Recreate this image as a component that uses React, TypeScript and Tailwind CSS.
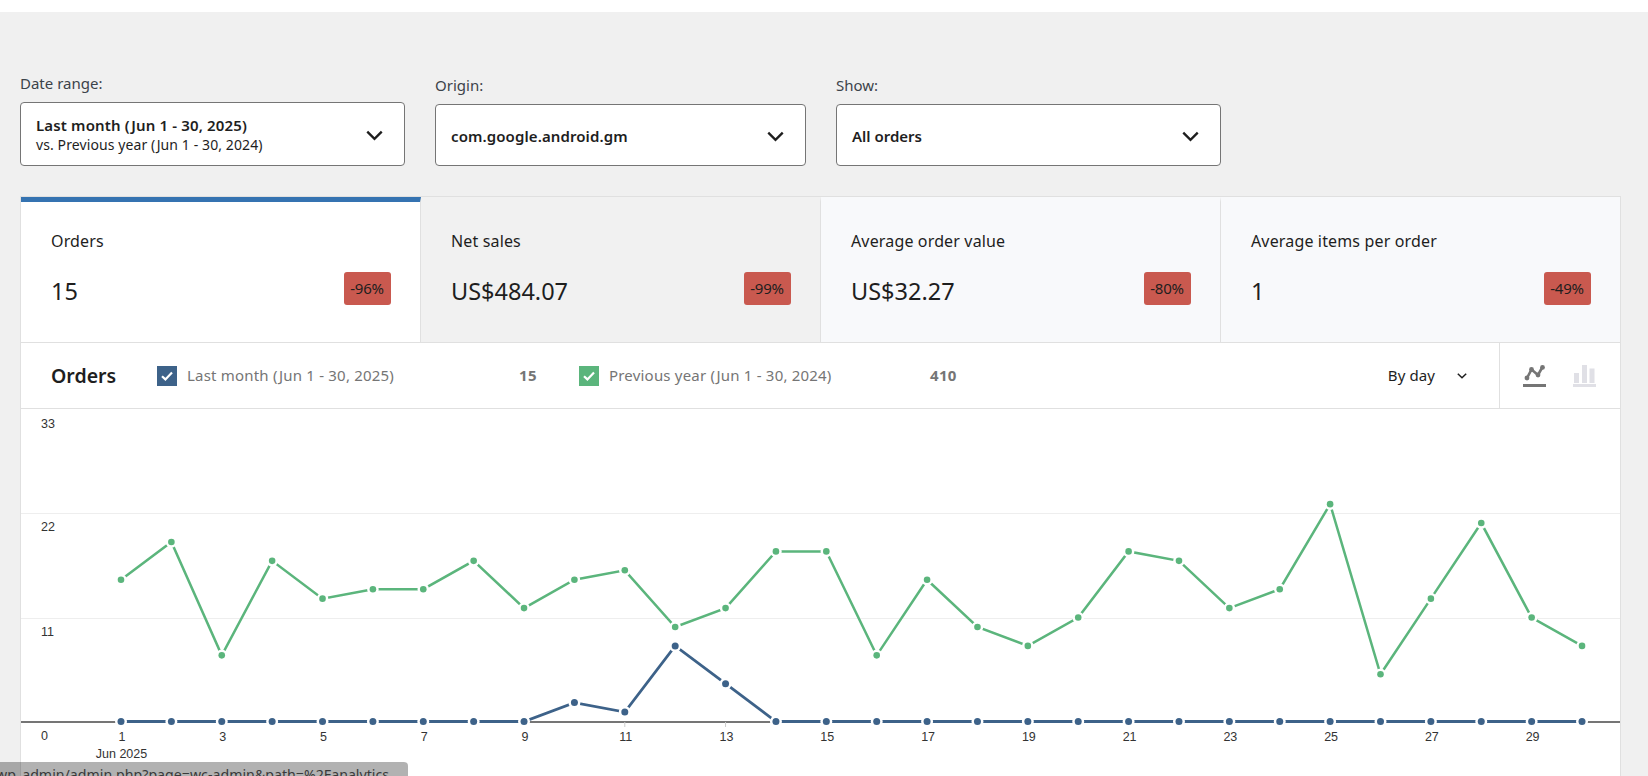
import React from "react";

const font = "font-['Noto_Sans',sans-serif]";

const tabs = [
  { label: "Orders", value: "15", delta: "-96%", bg: "bg-white", bar: "border-t-[#3573b1]" },
  { label: "Net sales", value: "US$484.07", delta: "-99%", bg: "bg-[#f1f1f1]", bar: "border-t-[#f1f1f1]" },
  { label: "Average order value", value: "US$32.27", delta: "-80%", bg: "bg-[#f8f9fb]", bar: "border-t-[#f8f9fb]" },
  { label: "Average items per order", value: "1", delta: "-49%", bg: "bg-[#f8f9fb]", bar: "border-t-[#f8f9fb]" },
];

const previous = [15, 19, 7, 17, 13, 14, 14, 17, 12, 15, 16, 10, 12, 18, 18, 7, 15, 10, 8, 11, 18, 17, 12, 14, 23, 5, 13, 21, 11, 8];
const current = [0, 0, 0, 0, 0, 0, 0, 0, 0, 2, 1, 8, 4, 0, 0, 0, 0, 0, 0, 0, 0, 0, 0, 0, 0, 0, 0, 0, 0, 0];

const dayX = (i: number) => 121 + i * 50.38;
const valY = (v: number) => 721.5 - v * 9.45;
const toPoints = (data: number[]) => data.map((v, i) => `${dayX(i)},${valY(v)}`).join(" ");

function Chevron({ className }: { className: string }) {
  return (
    <svg viewBox="0 0 16 10" fill="none" stroke="currentColor" strokeWidth="2.2" className={className}>
      <path d="M1.2 1.4 8 8.2l6.8-6.8" />
    </svg>
  );
}

function Filter({ label, width, boxHeight, children }: { label: string; width: string; boxHeight: string; children: React.ReactNode }) {
  return (
    <div className={width}>
      <div className="mb-[9px] text-[15px] leading-5 text-[#3c434a]">{label}</div>
      <div className={`flex ${boxHeight} items-center justify-between rounded border border-[#757575] bg-white pl-[15px] pr-[21px] text-[#1e1e1e]`}>
        <div className="pt-[2px]">{children}</div>
        <Chevron className="mt-[2px] h-[11px] w-[17px] text-[#1e1e1e]" />
      </div>
    </div>
  );
}

function LegendItem({ color, label, value, width, labelWidth }: { color: string; label: string; value: string; width: string; labelWidth: string }) {
  return (
    <div className={`flex items-center ${width}`}>
      <span className={`flex h-5 w-5 items-center justify-center ${color}`}>
        <svg viewBox="0 0 12 10" fill="none" stroke="white" strokeWidth="2.2" className="h-[10px] w-[12px]">
          <path d="M1 5.2 4.4 8.4 11 1.4" />
        </svg>
      </span>
      <span className={`ml-[10px] text-[15px] tracking-[0.2px] text-[#757575] ${labelWidth}`}>{label}</span>
      <span className="text-[15px] font-bold tracking-[0.3px] text-[#757575]">{value}</span>
    </div>
  );
}

function Chart() {
  return (
    <svg viewBox="21 409 1599 367" width="1599" height="367" className="block font-['Liberation_Sans',sans-serif]">
      <line x1="21" x2="1620" y1="513.5" y2="513.5" stroke="#eeeeee" />
      <line x1="21" x2="1620" y1="618.5" y2="618.5" stroke="#eeeeee" />
      <line x1="21" x2="1620" y1="722" y2="722" stroke="#757575" strokeWidth="2" />

      {[["33", 428], ["22", 531], ["11", 636], ["0", 740]].map(([t, y]) => (
        <text key={t} x="41" y={y} fontSize="12.5" fill="#333333">{t}</text>
      ))}

      {previous.map((_, i) =>
        i % 2 === 0 ? (
          <g key={i}>
            <line x1={dayX(i)} x2={dayX(i)} y1="722" y2="727" stroke="#cccccc" />
            <text x={dayX(i) + 1} y="741" fontSize="12.5" textAnchor="middle" fill="#333333">{i + 1}</text>
          </g>
        ) : null
      )}
      <text x="121.5" y="758" fontSize="12.5" textAnchor="middle" fill="#333333">Jun 2025</text>

      <polyline points={toPoints(previous)} fill="none" stroke="#5bb57c" strokeWidth="2.5" />
      {previous.map((v, i) => (
        <circle key={i} cx={dayX(i)} cy={valY(v)} r="3.3" fill="#5bb57c" stroke="white" strokeWidth="5" paintOrder="stroke" />
      ))}
      <polyline points={toPoints(current)} fill="none" stroke="#3d6289" strokeWidth="2.8" />
      {current.map((v, i) => (
        <circle key={i} cx={dayX(i)} cy={valY(v)} r="3.5" fill="#3d6289" stroke="white" strokeWidth="5" paintOrder="stroke" />
      ))}
    </svg>
  );
}

export default function App() {
  return (
    <div className={`relative h-[776px] overflow-hidden bg-white ${font}`}>
      <div className="h-3 bg-white" />
      <div className="h-[764px] bg-[#f0f0f0] pl-5 pr-[27px]">
        {/* filtros */}
        <div className="flex items-end gap-[30px] pt-[61px]">
          <Filter label="Date range:" width="w-[385px]" boxHeight="h-[64px]">
            <div className="text-[15px] font-semibold leading-5 tracking-[0.15px]">Last month (Jun 1 - 30, 2025)</div>
            <div className="text-sm leading-5 tracking-[0.1px]">vs. Previous year (Jun 1 - 30, 2024)</div>
          </Filter>
          <Filter label="Origin:" width="w-[371px]" boxHeight="h-[62px]">
            <div className="text-[15px] font-semibold tracking-[0.1px]">com.google.android.gm</div>
          </Filter>
          <Filter label="Show:" width="w-[385px]" boxHeight="h-[62px]">
            <div className="text-[15px] font-semibold">All orders</div>
          </Filter>
        </div>

        <div className="mt-[30px] w-[1601px] border border-[#e0e0e0] bg-white">
          {/* tarjetas */}
          <div className="flex h-[146px] border-b border-[#e0e0e0]">
            {tabs.map((t, i) => (
              <div
                key={t.label}
                className={`flex-1 border-t-[5px] pl-[30px] pr-[29.5px] pt-[29px] ${t.bg} ${t.bar} ${i < 3 ? "border-r border-r-[#e0e0e0]" : ""}`}
              >
                <div className="text-base leading-5 tracking-[0.15px] text-[#1e1e1e]">{t.label}</div>
                <div className="mt-[19px] flex items-center justify-between">
                  <span className="mt-[5px] text-[23.5px] leading-8 text-[#1e1e1e]">{t.value}</span>
                  <span className="flex h-[33px] w-[47px] items-center justify-center rounded-[3px] bg-[#c9594f] text-[15px] tracking-[-0.2px] text-[#1e1e1e]">{t.delta}</span>
                </div>
              </div>
            ))}
          </div>

          {/* cabecera del grafico */}
          <div className="flex h-[66px] items-center border-b border-[#e0e0e0]">
            <div className="w-[136px] pl-[30px] text-[19.5px] font-semibold text-[#1e1e1e]">Orders</div>
            <LegendItem color="bg-[#3d6289]" label="Last month (Jun 1 - 30, 2025)" value="15" width="w-[422px]" labelWidth="w-[332px]" />
            <LegendItem color="bg-[#5bb57c]" label="Previous year (Jun 1 - 30, 2024)" value="410" width="w-[400px]" labelWidth="w-[321px]" />
            <div className="ml-auto flex items-center pr-[32px]">
              <span className="text-[15px] tracking-[0.1px] text-[#1e1e1e]">By day</span>
              <svg viewBox="0 0 10 6" fill="none" stroke="currentColor" strokeWidth="1.5" className="ml-[22px] h-[6px] w-[10px] text-[#1e1e1e]">
                <path d="M.8.8 5 4.8 9.2.8" />
              </svg>
            </div>
            <div className="flex h-full w-[121px] items-center gap-[27px] border-l border-[#e0e0e0] pl-[23px]">
              <svg viewBox="0 0 23 22" className="h-[22px] w-[23px]" fill="#757575">
                <path d="M4 13 8.5 4.5 15 10 19.5 2" fill="none" stroke="#757575" strokeWidth="2.6" />
                <circle cx="4" cy="13" r="2.4" />
                <circle cx="8.5" cy="4.5" r="2.4" />
                <circle cx="15" cy="10" r="2.4" />
                <circle cx="19.5" cy="2.4" r="2.4" />
                <rect x="0" y="19" width="23" height="3" />
              </svg>
              <svg viewBox="0 0 23 22" className="h-[22px] w-[23px]" fill="#e0e0e6">
                <rect x="1" y="8" width="5" height="10" />
                <rect x="9" y="0" width="5" height="18" />
                <rect x="16.5" y="3.5" width="5" height="14.5" />
                <rect x="0" y="19" width="23" height="3" />
              </svg>
            </div>
          </div>

          <Chart />
        </div>
      </div>

      {/* barra de estado del navegador */}
      <div className="absolute bottom-0 left-0 h-[14px] w-[408px] overflow-hidden rounded-tr-[4px] bg-black/30">
        <div className="ml-[-4px] whitespace-nowrap pt-[3px] text-[14.2px] leading-5 text-[#3a3a3a]">wp_admin/admin.php?page=wc-admin&amp;path=%2Fanalytics</div>
      </div>
    </div>
  );
}
